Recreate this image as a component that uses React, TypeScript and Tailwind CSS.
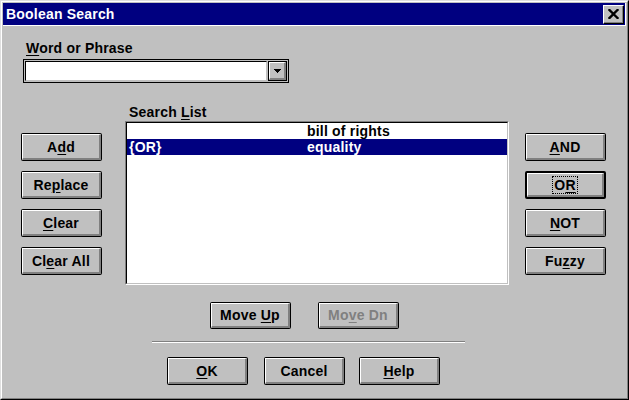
import type { ReactNode } from "react";

const font = "font-['Liberation_Sans',Arial,sans-serif] font-bold text-[14px] leading-[16px] tracking-[0.2px]";

function Btn({
  children,
  isDefault,
  disabled,
  className = "",
  h = "h-[28px]",
}: {
  children: ReactNode;
  isDefault?: boolean;
  disabled?: boolean;
  className?: string;
  h?: string;
}) {
  return (
    <div className={`${className} ${h} w-[81px] shrink-0 rounded-[2px] bg-black ${isDefault ? "p-[2px]" : "p-px"}`}>
      <div className="h-full bg-[#c0c0c0] border-t border-l border-white border-r-2 border-b-2 border-r-[#808080] border-b-[#808080] flex items-center justify-center">
        <span className={disabled ? "text-[#808080]" : "text-black"}>{children}</span>
      </div>
    </div>
  );
}

function U({ children }: { children: ReactNode }) {
  return <span className="underline underline-offset-[2px] decoration-1">{children}</span>;
}

export default function App() {
  return (
    <div className={`w-[629px] h-[400px] bg-[#c0c0c0] ${font} text-black`}>
      <div className="w-full h-full border border-t-[#dfdfdf] border-l-[#dfdfdf] border-r-black border-b-black">
        <div className="w-full h-full border border-t-white border-l-white border-r-[#808080] border-b-[#808080] p-px flex flex-col">
          {/* title bar */}
          <div className="h-[23px] bg-[#000080] border-b border-r border-white flex items-start justify-between shrink-0">
            <span className="text-white pl-[3px] mt-[3px]">Boolean Search</span>
            <div className="mt-[2px] mr-[1px] w-[21px] h-[19px] bg-[#c0c0c0] border border-t-white border-l-white border-r-black border-b-black">
              <div className="w-full h-full border-r border-b border-[#808080] flex items-center justify-center">
                <svg width="11" height="10" viewBox="0 0 11 10">
                  <path d="M1.5 1 L9.5 9 M9.5 1 L1.5 9" stroke="#000" strokeWidth="2.4" strokeLinecap="square" fill="none" />
                </svg>
              </div>
            </div>
          </div>

          {/* word or phrase */}
          <div className="ml-[23px] mt-[14px]">
            <U>W</U>ord or Phrase
          </div>
          <div className="ml-[20px] mt-[3px] w-[266px] h-[24px] border border-black p-px bg-[#c0c0c0] flex">
            <div className="flex-1 bg-white border-t border-l border-black border-b border-r border-b-[#c0c0c0] border-r-[#c0c0c0]" />
            <div className="w-[19px] ml-px bg-black p-px">
              <div className="h-full bg-[#c0c0c0] border-t border-l border-white border-r-2 border-b-2 border-r-[#808080] border-b-[#808080] flex items-center justify-center">
                <svg width="7" height="4" viewBox="0 0 7 4" shapeRendering="crispEdges">
                  <path d="M0 0h7v1h-1v1h-1v1h-1v1h-1v-1h-1v-1h-1v-1h-1z" fill="#000" />
                </svg>
              </div>
            </div>
          </div>

          {/* main row */}
          <div className="flex items-start mt-[21px]">
            <div className="ml-[18px] mt-[29px] flex flex-col gap-[10px]">
              <Btn>A<U>d</U>d</Btn>
              <Btn>Re<U>p</U>lace</Btn>
              <Btn><U>C</U>lear</Btn>
              <Btn>Cl<U>e</U>ar All</Btn>
            </div>

            <div className="ml-[23px] w-[384px]">
              <div className="pl-[4px]">
                Search <U>L</U>ist
              </div>
              <div className="mt-px h-[164px] border border-t-[#808080] border-l-[#808080] border-r-white border-b-white">
                <div className="h-full bg-white border border-t-black border-l-black border-r-[#c0c0c0] border-b-[#c0c0c0]">
                  <div className="flex h-[16px] pl-px">
                    <span className="w-[179px] pl-px"></span>
                    <span>bill of rights</span>
                  </div>
                  <div className="flex h-[16px] bg-[#000080] text-white pl-px">
                    <span className="w-[179px] pl-px">{"{OR}"}</span>
                    <span>equality</span>
                  </div>
                </div>
              </div>
            </div>

            <div className="ml-[16px] mt-[29px] flex flex-col gap-[10px]">
              <Btn><U>A</U>ND</Btn>
              <Btn isDefault>
                <span className="border border-dotted border-black px-px">O<U>R</U></span>
              </Btn>
              <Btn><U>N</U>OT</Btn>
              <Btn>Fu<U>z</U>zy</Btn>
            </div>
          </div>

          {/* move buttons */}
          <div className="flex mt-[17px] ml-[207px] gap-[27px]">
            <Btn h="h-[27px]">Move <U>U</U>p</Btn>
            <Btn h="h-[27px]" disabled>Mo<U>v</U>e Dn</Btn>
          </div>

          {/* separator */}
          <div className="ml-[149px] mt-[12px] w-[313px] border-t border-b border-t-[#808080] border-b-white" />

          {/* bottom buttons */}
          <div className="flex mt-[14px] ml-[164px]">
            <Btn><U>O</U>K</Btn>
            <Btn className="ml-[16px]">Cancel</Btn>
            <Btn className="ml-[14px]"><U>H</U>elp</Btn>
          </div>
        </div>
      </div>
    </div>
  );
}
